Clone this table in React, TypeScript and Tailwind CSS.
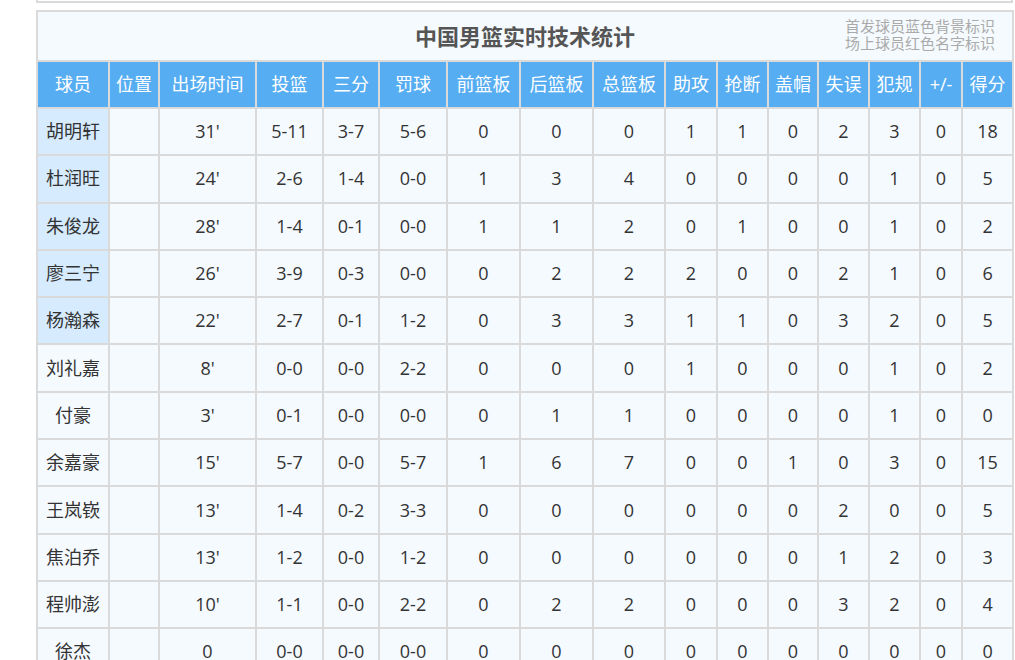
import React from 'react';

interface PlayerLine {
  name: string;
  starter: boolean;
  min: string;
  fg: string;
  tp: string;
  ft: string;
  stats: number[]; // 前篮板 后篮板 总篮板 助攻 抢断 盖帽 失误 犯规 +/- 得分
}

const headers = ['球员', '位置', '出场时间', '投篮', '三分', '罚球', '前篮板', '后篮板', '总篮板', '助攻', '抢断', '盖帽', '失误', '犯规', '+/-', '得分'];
const widths = [72, 50, 97, 67, 56, 68, 73, 73, 72, 52, 51, 50, 51, 51, 42, 51];

const players: PlayerLine[] = [
  { name: '胡明轩', starter: true, min: "31'", fg: '5-11', tp: '3-7', ft: '5-6', stats: [0, 0, 0, 1, 1, 0, 2, 3, 0, 18] },
  { name: '杜润旺', starter: true, min: "24'", fg: '2-6', tp: '1-4', ft: '0-0', stats: [1, 3, 4, 0, 0, 0, 0, 1, 0, 5] },
  { name: '朱俊龙', starter: true, min: "28'", fg: '1-4', tp: '0-1', ft: '0-0', stats: [1, 1, 2, 0, 1, 0, 0, 1, 0, 2] },
  { name: '廖三宁', starter: true, min: "26'", fg: '3-9', tp: '0-3', ft: '0-0', stats: [0, 2, 2, 2, 0, 0, 2, 1, 0, 6] },
  { name: '杨瀚森', starter: true, min: "22'", fg: '2-7', tp: '0-1', ft: '1-2', stats: [0, 3, 3, 1, 1, 0, 3, 2, 0, 5] },
  { name: '刘礼嘉', starter: false, min: "8'", fg: '0-0', tp: '0-0', ft: '2-2', stats: [0, 0, 0, 1, 0, 0, 0, 1, 0, 2] },
  { name: '付豪', starter: false, min: "3'", fg: '0-1', tp: '0-0', ft: '0-0', stats: [0, 1, 1, 0, 0, 0, 0, 1, 0, 0] },
  { name: '余嘉豪', starter: false, min: "15'", fg: '5-7', tp: '0-0', ft: '5-7', stats: [1, 6, 7, 0, 0, 1, 0, 3, 0, 15] },
  { name: '王岚嵚', starter: false, min: "13'", fg: '1-4', tp: '0-2', ft: '3-3', stats: [0, 0, 0, 0, 0, 0, 2, 0, 0, 5] },
  { name: '焦泊乔', starter: false, min: "13'", fg: '1-2', tp: '0-0', ft: '1-2', stats: [0, 0, 0, 0, 0, 0, 1, 2, 0, 3] },
  { name: '程帅澎', starter: false, min: "10'", fg: '1-1', tp: '0-0', ft: '2-2', stats: [0, 2, 2, 0, 0, 0, 3, 2, 0, 4] },
  { name: '徐杰', starter: false, min: '0', fg: '0-0', tp: '0-0', ft: '0-0', stats: [0, 0, 0, 0, 0, 0, 0, 0, 0, 0] },
];

export default function App() {
  return (
    <div
      className="h-[660px] overflow-hidden bg-white text-[#333]"
      style={{ fontFamily: '"Open Sans", "Noto Sans CJK SC", sans-serif' }}
    >
      {/* bottom edge of the box above */}
      <div className="ml-[36px] h-[3px] w-[977px] border-x-2 border-b-2 border-[#dadada] bg-white" />

      <table className="ml-[36px] mt-[7px] w-[978px] table-fixed border-collapse bg-[#f5faff] text-[18px]">
        <colgroup>
          {widths.map((w, i) => (
            <col key={i} style={{ width: w }} />
          ))}
        </colgroup>
        <thead>
          <tr className="h-[50px]">
            <th colSpan={16} className="border-2 border-[#dadada] bg-[#f5faff] p-0">
              <div className="grid grid-cols-[1fr_auto_1fr] items-center">
                <div />
                <div className="pt-[1px] text-[22px] font-bold text-[#555]">中国男篮实时技术统计</div>
                <div className="pb-[2px] pr-[17px] text-right text-[15px] font-normal leading-[17px] text-[#aaa]">
                  <div>首发球员蓝色背景标识</div>
                  <div>场上球员红色名字标识</div>
                </div>
              </div>
            </th>
          </tr>
          <tr className="h-[47px] bg-[#56adf2] text-white">
            {headers.map(h => (
              <th key={h} className="whitespace-nowrap border-2 border-[#dadada] p-0 text-center font-normal">
                {h}
              </th>
            ))}
          </tr>
        </thead>
        <tbody>
          {players.map(p => (
            <tr key={p.name} className="h-[47.3px]">
              <td className={`border-2 border-[#dadada] p-0 text-center ${p.starter ? 'bg-[#d6ebfd]' : ''}`}>{p.name}</td>
              <td className="border-2 border-[#dadada] p-0" />
              <td className="border-2 border-[#dadada] p-0 text-center">{p.min}</td>
              <td className="border-2 border-[#dadada] p-0 text-center">{p.fg}</td>
              <td className="border-2 border-[#dadada] p-0 text-center">{p.tp}</td>
              <td className="border-2 border-[#dadada] p-0 text-center">{p.ft}</td>
              {p.stats.map((s, i) => (
                <td key={i} className="border-2 border-[#dadada] p-0 text-center">{s}</td>
              ))}
            </tr>
          ))}
        </tbody>
      </table>
    </div>
  );
}
